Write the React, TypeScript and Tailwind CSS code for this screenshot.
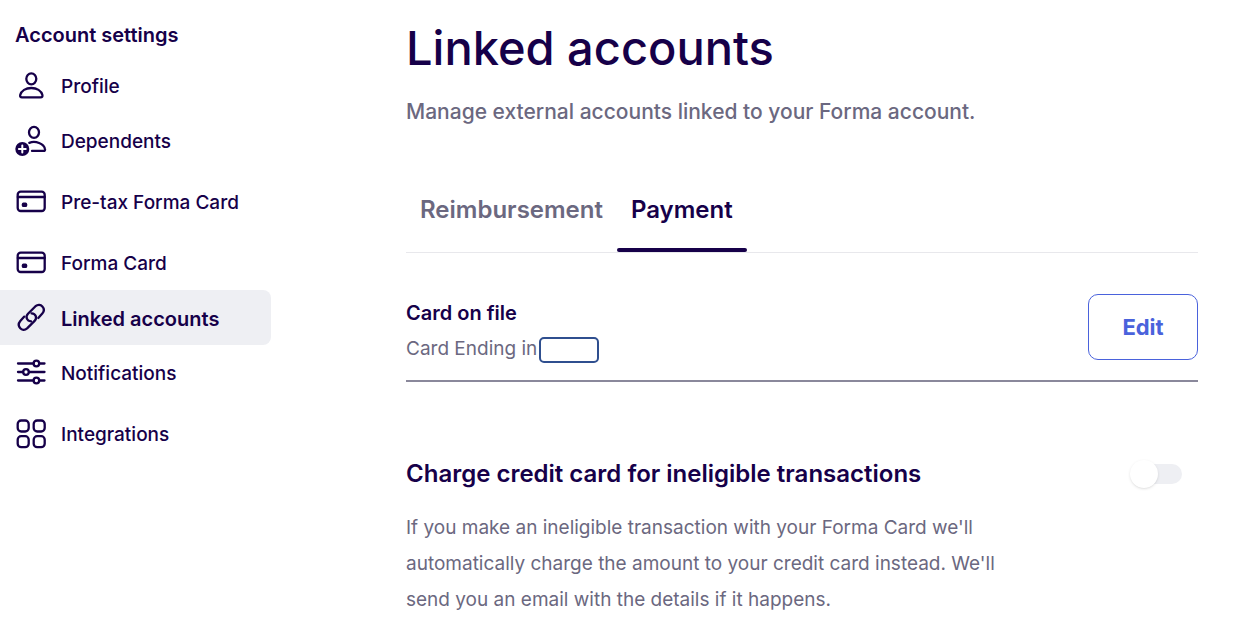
import React, { useState } from 'react';

interface NavItem {
  label: string;
  icon: React.ReactNode;
  tall?: boolean;
}

const Icon: React.FC<{ children: React.ReactNode }> = ({ children }) => (
  <svg
    viewBox="0 0 32 32"
    className="h-8 w-8 shrink-0"
    fill="none"
    stroke="currentColor"
    strokeWidth="2.3"
    strokeLinecap="round"
    strokeLinejoin="round"
    aria-hidden="true"
  >
    {children}
  </svg>
);

const cardIcon = (
  <Icon>
    <rect x="2.7" y="5.7" width="27" height="19.3" rx="3" />
    <path d="M3 11h26.5" strokeWidth="2.6" />
    <rect x="6.8" y="16.6" width="5.4" height="4.4" rx="1.6" fill="currentColor" stroke="none" />
  </Icon>
);

const navItems: NavItem[] = [
  {
    label: 'Profile',
    icon: (
      <Icon>
        <ellipse cx="16.3" cy="8.8" rx="5" ry="5.5" />
        <path d="M7 27.3h18.600q2.300 0 1.800-2.300C26.300 20.800 21.800 18 16.300 18S6.300 20.800 5.200 25q-.5 2.300 1.800 2.300z" />
      </Icon>
    ),
  },
  {
    label: 'Dependents',
    icon: (
      <Icon>
        <ellipse cx="19" cy="7.3" rx="5" ry="5.5" />
        <path d="M14.3 17.800C20.500 15.500 29 18.500 30 24q.4 1.900-1.500 1.900H17" />
        <circle cx="7.3" cy="24" r="7" fill="currentColor" stroke="none" />
        <path d="M7.3 20.600v6.800M3.900 24h6.800" stroke="white" strokeWidth="2" />
      </Icon>
    ),
  },
  { label: 'Pre-tax Forma Card', icon: cardIcon, tall: true },
  { label: 'Forma Card', icon: cardIcon },
  {
    label: 'Linked accounts',
    icon: (
      <Icon>
        <path d="M23.3 16l4-4.400C31.500 6.500 25.500 0 20.500 4.200L13 11.700C10 15 12 19 16 19.300" />
        <path d="M9.3 14.600l-4 4.400C1.100 24.100 7.100 30.600 12.100 26.400L19.600 18.900C22.600 15.600 20.600 11.600 16.600 11.300" />
      </Icon>
    ),
  },
  {
    label: 'Notifications',
    icon: (
      <Icon>
        <path d="M3 6.500h15.500M24.500 6.500h5M3 15h5M14 15h15.500M3 23.500h15.500M24.500 23.500h5" />
        <circle cx="21.4" cy="6.5" r="2.800" />
        <circle cx="11" cy="15" r="2.800" />
        <circle cx="21.4" cy="23.5" r="2.800" />
      </Icon>
    ),
  },
  {
    label: 'Integrations',
    tall: true,
    icon: (
      <Icon>
        <rect x="2.7" y="2.5" width="11" height="11" rx="3.5" />
        <rect x="18.7" y="2.5" width="11" height="11" rx="3.5" />
        <rect x="2.7" y="18.2" width="11" height="11" rx="3.5" />
        <rect x="18.7" y="18.2" width="11" height="11" rx="3.5" />
      </Icon>
    ),
  },
];

const tabs = ['Reimbursement', 'Payment'];

const App: React.FC = () => {
  const [page, setPage] = useState('Linked accounts');
  const [tab, setTab] = useState('Payment');
  const [charge, setCharge] = useState(false);

  return (
    <div className="flex min-h-screen bg-white font-[Inter,sans-serif] text-[#160049]">
      <aside className="w-[271px] shrink-0">
        <h2 className="px-[15px] pt-5 pb-2 text-xl leading-[30px] font-semibold">Account settings</h2>
        <nav>
          <ul>
            {navItems.map((item) => (
              <li key={item.label}>
                <a
                  href="#"
                  onClick={() => setPage(item.label)}
                  className={`flex items-center gap-[14px] rounded-r-lg px-[15px] whitespace-nowrap ${
                    item.tall ? 'h-[67px]' : 'h-[55px]'
                  } ${page === item.label ? 'bg-[#eeeff3] text-xl font-semibold' : 'text-[19px] font-medium'}`}
                >
                  {item.icon}
                  <span className="pt-[3px]">{item.label}</span>
                </a>
              </li>
            ))}
          </ul>
        </nav>
      </aside>

      <main className="mr-[50px] ml-[135px] flex-1">
        <h1 className="pt-5 text-[47px] leading-14 font-medium">Linked accounts</h1>
        <p className="mt-5 text-[21px] leading-8 font-medium text-[#6b6880]">
          Manage external accounts linked to your Forma account.
        </p>

        <div role="tablist" className="mt-[52px] flex border-b border-[#e8e8ec]">
          {tabs.map((name) => (
            <button
              key={name}
              role="tab"
              aria-selected={tab === name}
              onClick={() => setTab(name)}
              className={`relative h-[72px] px-[14px] pb-3 text-2xl font-semibold ${
                tab === name ? '' : 'text-[#6b6880]'
              }`}
            >
              {name}
              {tab === name && <span className="absolute inset-x-0 bottom-0 h-1 rounded-full bg-[#160049]" />}
            </button>
          ))}
        </div>

        <section className="mt-[41px] flex items-start justify-between border-b-2 border-[#8a889b] pb-5">
          <div className="pt-1">
            <h3 className="text-xl leading-[30px] font-semibold">Card on file</h3>
            <div className="-mb-1 mt-[9px] flex items-start gap-[2px]">
              <label htmlFor="card" className="text-[19px] leading-6 text-[#6b6880]">
                Card Ending in
              </label>
              <input id="card" className="h-[26px] w-[60px] rounded-[5px] border-2 border-[#2f4f8f] px-1 text-base" />
            </div>
          </div>
          <button className="h-[66px] w-[110px] rounded-[10px] border border-[#4a62dc] text-[22px] font-bold text-[#4a62dc]">
            Edit
          </button>
        </section>

        <section className="mt-[74px]">
          <div className="flex items-center justify-between pr-4">
            <label htmlFor="charge" className="text-2xl leading-9 font-semibold">
              Charge credit card for ineligible transactions
            </label>
            <input
              id="charge"
              type="checkbox"
              role="switch"
              checked={charge}
              onChange={(e) => setCharge(e.target.checked)}
              className="flex h-5 w-12 appearance-none items-center rounded-full bg-[#eeeff3] before:-ml-1 before:h-7 before:w-7 before:rounded-full before:bg-white before:shadow before:content-[''] checked:bg-[#4a62dc] checked:before:ml-6"
            />
          </div>
          <p className="mt-[18px] max-w-[600px] text-[19px] leading-9 text-[#6b6880]">
            If you make an ineligible transaction with your Forma Card we'll automatically charge the amount to your
            credit card instead. We'll send you an email with the details if it happens.
          </p>
        </section>
      </main>
    </div>
  );
};

export default App;
